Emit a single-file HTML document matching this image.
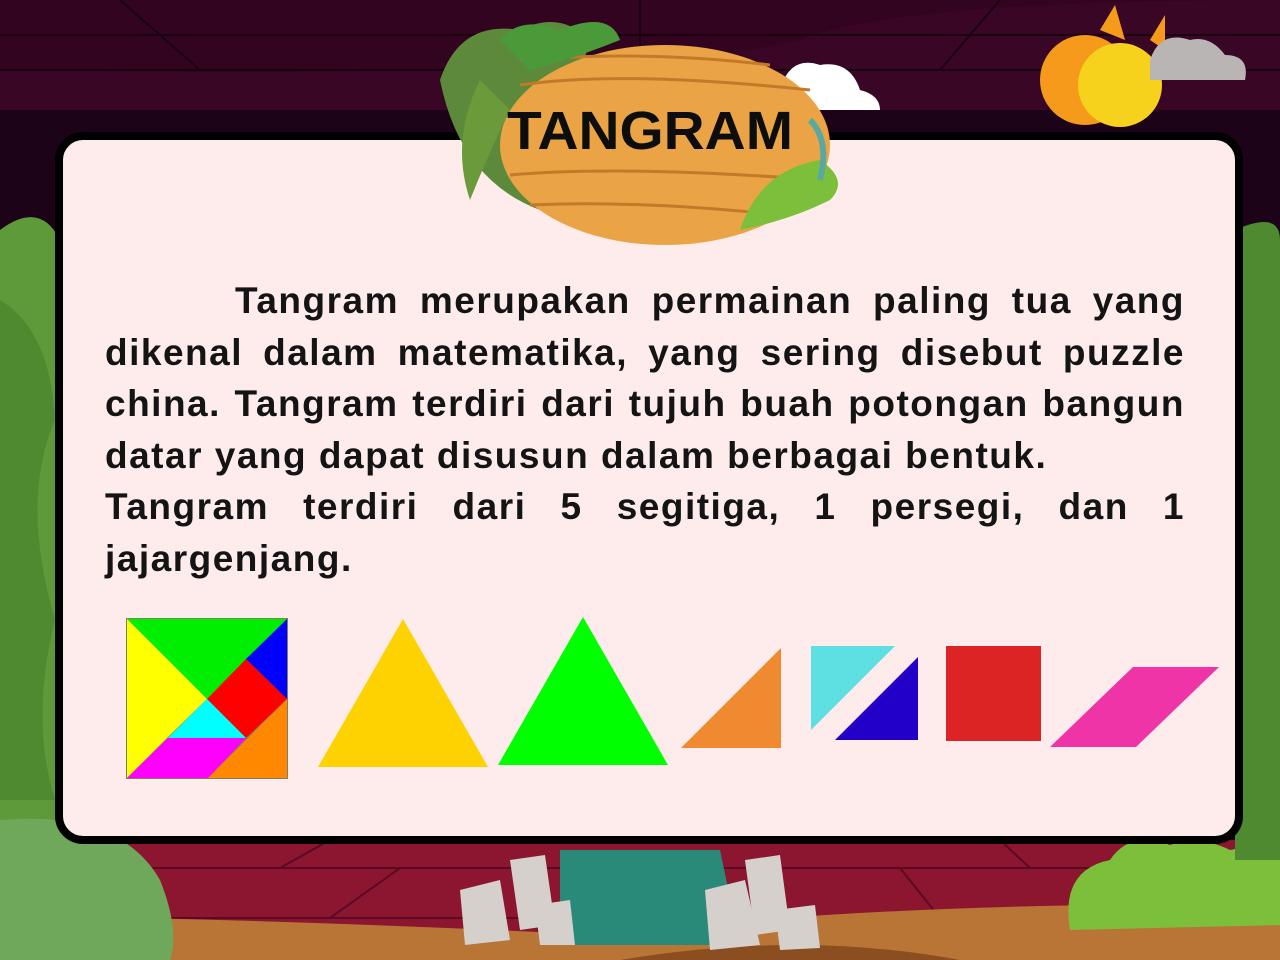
<!DOCTYPE html>
<html><head><meta charset="utf-8"><style>
html,body{margin:0;padding:0}
body{width:1280px;height:960px;position:relative;overflow:hidden;background:#1a0315;font-family:"Liberation Sans",sans-serif}
.abs{position:absolute}
.card{left:55px;top:132px;width:1172px;height:696px;background:#fdeceb;border:8px solid #000;border-radius:28px}
.txt{left:105px;top:275px;width:1080px;font-weight:bold;font-size:37px;letter-spacing:1.5px;color:#141414;line-height:51.5px}
.txt div{text-align:justify;text-align-last:justify;white-space:nowrap;height:51.5px}
.txt div.l{text-align-last:left}
</style></head><body>
<svg class="abs" style="left:0;top:0" width="1280" height="960">
<rect x="0" y="0" width="1280" height="110" fill="#33041f"/>
<path d="M0 110 L1280 110 L1280 0 Q900 0 800 40 Q640 80 0 70Z" fill="#3a0626"/>
<g stroke="#1a0110" stroke-width="2" fill="none"><line x1="0" y1="35" x2="1280" y2="35"/><line x1="0" y1="70" x2="1280" y2="70"/><line x1="120" y1="0" x2="200" y2="70"/><line x1="640" y1="0" x2="640" y2="70"/><line x1="1000" y1="0" x2="940" y2="70"/></g>
<rect x="0" y="110" width="1280" height="740" fill="#1c0317"/>
<rect x="0" y="840" width="1280" height="120" fill="#8c1530"/>
<g stroke="#5a0a24" stroke-width="2"><line x1="0" y1="868" x2="1280" y2="868"/><line x1="0" y1="918" x2="1280" y2="918"/><line x1="280" y1="868" x2="330" y2="840"/><line x1="400" y1="868" x2="330" y2="918"/><line x1="900" y1="868" x2="940" y2="918"/><line x1="1000" y1="840" x2="1030" y2="868"/></g>
<path d="M0 915 Q300 920 600 935 Q900 900 1280 905 L1280 960 L0 960Z" fill="#b87535"/>
<path d="M620 960 Q800 930 960 960Z" fill="#8a4e20"/>
<path d="M560 850 L720 850 L740 945 L560 945Z" fill="#2a8a7a"/>
<g fill="#d6d0cc"><path d="M460 890 L500 880 L510 940 L465 945Z"/><path d="M510 860 L545 855 L555 925 L520 930Z"/><path d="M535 905 L570 900 L575 945 L540 945Z"/><path d="M705 890 L745 880 L760 945 L710 950Z"/><path d="M745 860 L780 855 L790 930 L755 935Z"/><path d="M775 910 L815 905 L820 948 L780 950Z"/></g>
<path d="M1070 930 Q1060 870 1110 860 Q1130 830 1170 845 Q1200 835 1230 850 Q1280 840 1280 860 L1280 925Z" fill="#7cbf3a"/>
<path d="M1040 80 A45 45 0 1 0 1130 80 A45 45 0 1 0 1040 80Z" fill="#f59a1a"/>
<circle cx="1120" cy="85" r="42" fill="#f7d21c"/>
<path d="M1100 30 L1115 5 L1125 40Z M1150 40 L1165 15 L1165 50Z" fill="#f59a1a"/>
<path d="M1150 60 Q1160 30 1190 40 Q1210 35 1225 55 Q1250 55 1245 80 L1150 80Z" fill="#bab5b5"/>
<path d="M780 90 Q790 55 820 65 Q850 60 860 90 Q880 95 880 110 L780 110Z" fill="#fff"/>
<path d="M0 230 Q40 200 60 240 L60 860 L0 860Z" fill="#5e9a3a"/>
<path d="M0 300 Q50 330 55 420 Q20 500 55 620 Q30 720 55 800 L0 800Z" fill="#4d8a30"/>
<path d="M0 820 Q120 810 160 880 Q180 930 170 960 L0 960Z" fill="#6fa85a"/>
<path d="M1235 230 Q1280 210 1280 240 L1280 860 L1235 860Z" fill="#4d8a30"/>
</svg>
<div class="abs card"></div>
<svg class="abs" style="left:420px;top:0" width="460" height="260">
<path d="M20 80 Q40 20 100 30 Q140 10 170 40 L120 210 Q40 180 20 80Z" fill="#5d8a3a"/>
<ellipse cx="245" cy="145" rx="165" ry="100" fill="#eaa445"/>
<g stroke="#c27a28" stroke-width="3" fill="none"><path d="M100 85 Q200 70 390 90"/><path d="M90 175 Q200 165 400 180"/><path d="M110 205 Q220 200 360 215"/><path d="M100 60 Q230 50 350 65"/></g>
<path d="M80 40 Q100 15 140 30 Q190 10 200 40 Q150 60 110 70Z" fill="#4a9a3a"/>
<path d="M60 80 Q30 140 50 200 Q70 150 90 110Z" fill="#6a9a3a"/>
<path d="M320 230 Q340 170 400 160 Q430 180 410 200 Q370 220 320 230Z" fill="#7cbf3a"/>
<path d="M390 120 Q410 140 400 180" stroke="#5aa8a0" stroke-width="6" fill="none"/>
<text x="230" y="149" text-anchor="middle" font-family="Liberation Sans,sans-serif" font-weight="bold" font-size="54" fill="#0d0d0d" textLength="286" lengthAdjust="spacingAndGlyphs">TANGRAM</text>
</svg>
<div class="abs txt">
<div style="padding-left:130px">Tangram merupakan permainan paling tua yang</div>
<div>dikenal dalam matematika, yang sering disebut puzzle</div>
<div>china. Tangram terdiri dari tujuh buah potongan bangun</div>
<div class="l">datar yang dapat disusun dalam berbagai bentuk.</div>
<div>Tangram terdiri dari 5 segitiga, 1 persegi, dan 1</div>
<div class="l">jajargenjang.</div>
</div>
<svg class="abs" style="left:0;top:0" width="1280" height="960">
<rect x="126" y="618" width="162" height="161" fill="#808060"/>
<polygon points="127,619 287,619 207,699" fill="#00ee00"/>
<polygon points="287,619 287,699 246,659" fill="#0000ff"/>
<polygon points="246,659 287,699 246,738 207,699" fill="#ff0000"/>
<polygon points="127,619 207,699 167,738 127,778" fill="#ffff00"/>
<polygon points="207,699 246,738 168,738" fill="#00ffff"/>
<polygon points="168,738 246,738 208,778 127,778" fill="#ff00ff"/>
<polygon points="287,699 287,778 208,778" fill="#ff8800"/>
<polygon points="318,767 488,767 403,619" fill="#fdd200"/>
<polygon points="498,765 668,765 583,617" fill="#00ff00"/>
<polygon points="681,748 781,748 781,648" fill="#ef8a30"/>
<polygon points="811,646 895,646 811,730" fill="#5ee0e3"/>
<polygon points="835,740 918,740 918,657" fill="#2200c8"/>
<rect x="946" y="646" width="95" height="95" fill="#dc2424"/>
<polygon points="1133,667 1219,667 1136,747 1050,747" fill="#ee34a6"/>
</svg>
</body></html>
